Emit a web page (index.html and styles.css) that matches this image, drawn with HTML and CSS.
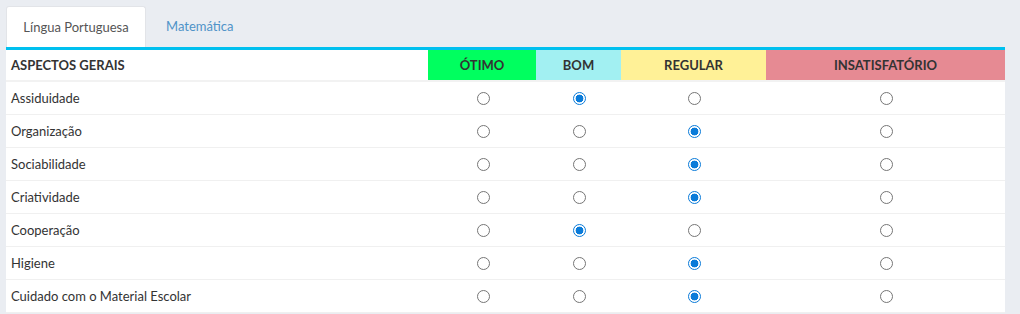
FILE: index.html
```html
<!DOCTYPE html>
<html lang="pt">
<head>
<meta charset="utf-8">
<link rel="stylesheet" href="styles.css">
</head>
<body>
<div class="wrap">
  <ul class="tabs">
    <li class="tab active">Língua Portuguesa</li>
    <li class="tab">Matemática</li>
  </ul>
  <div class="pane">
    <table class="grid">
      <colgroup>
        <col class="c-name"><col class="c-otimo"><col class="c-bom"><col class="c-reg"><col class="c-ins">
      </colgroup>
      <thead>
        <tr>
          <th class="h-name">ASPECTOS GERAIS</th>
          <th class="h-otimo">ÓTIMO</th>
          <th class="h-bom">BOM</th>
          <th class="h-reg">REGULAR</th>
          <th class="h-ins">INSATISFATÓRIO</th>
        </tr>
      </thead>
      <tbody>
        <tr><td>Assiduidade</td><td><input type="radio" name="r1"></td><td><input type="radio" name="r1" checked></td><td><input type="radio" name="r1"></td><td><input type="radio" name="r1"></td></tr>
        <tr><td>Organização</td><td><input type="radio" name="r2"></td><td><input type="radio" name="r2"></td><td><input type="radio" name="r2" checked></td><td><input type="radio" name="r2"></td></tr>
        <tr><td>Sociabilidade</td><td><input type="radio" name="r3"></td><td><input type="radio" name="r3"></td><td><input type="radio" name="r3" checked></td><td><input type="radio" name="r3"></td></tr>
        <tr><td>Criatividade</td><td><input type="radio" name="r4"></td><td><input type="radio" name="r4"></td><td><input type="radio" name="r4" checked></td><td><input type="radio" name="r4"></td></tr>
        <tr><td>Cooperação</td><td><input type="radio" name="r5"></td><td><input type="radio" name="r5" checked></td><td><input type="radio" name="r5"></td><td><input type="radio" name="r5"></td></tr>
        <tr><td>Higiene</td><td><input type="radio" name="r6"></td><td><input type="radio" name="r6"></td><td><input type="radio" name="r6" checked></td><td><input type="radio" name="r6"></td></tr>
        <tr><td>Cuidado com o Material Escolar</td><td><input type="radio" name="r7"></td><td><input type="radio" name="r7"></td><td><input type="radio" name="r7" checked></td><td><input type="radio" name="r7"></td></tr>
      </tbody>
    </table>
  </div>
</div>
</body>
</html>
```

FILE: styles.css
```css
* { box-sizing: border-box; }
html, body { margin: 0; padding: 0; }
body {
  background: #eaedf2;
  font-family: "Lato", "Liberation Sans", sans-serif;
  font-size: 13px;
  color: #333;
}
.wrap {
  padding: 6px 15px 0 6px;
  width: 1020px;
}
.tabs {
  list-style: none;
  margin: 0;
  padding: 0;
  display: flex;
  height: 41px;
}
.tab {
  padding: 0 16px;
  line-height: 41px;
  color: #4f93c8;
  margin-right: 4px;
}
.tab.active {
  background: #fff;
  color: #555;
  border: 1px solid #e2e4e8;
  border-bottom: none;
  border-radius: 3px 3px 0 0;
  width: 140px;
  text-align: center;
  padding: 0;
  margin-right: 4px;
}
.pane {
  background: #fff;
  border-top: 3px solid #00c0ef;
  width: 999px;
}
.grid {
  width: 999px;
  border-collapse: collapse;
  table-layout: fixed;
}
.c-name { width: 422px; }
.c-otimo { width: 108px; }
.c-bom { width: 85px; }
.c-reg { width: 145px; }
.c-ins { width: 239px; }
th {
  height: 31px;
  font-weight: 700;
  font-size: 13px;
  text-align: center;
  color: #333;
  padding: 0;
  border-bottom: 2px solid #f2f2f2;
}
th.h-name { text-align: left; padding-left: 5px; }
.h-otimo { background: #00ff5f; }
.h-bom { background: #a2f0f2; }
.h-reg { background: #fff197; }
.h-ins { background: #e68a93; }
td {
  height: 33px;
  padding: 0 0 0 2px;
  text-align: center;
  border-bottom: 1px solid #f0f0f0;
  vertical-align: middle;
}
td:first-child { text-align: left; padding-left: 5px; }
input[type="radio"] {
  appearance: none;
  -webkit-appearance: none;
  width: 13px;
  height: 13px;
  margin: 0;
  border: 1px solid #767676;
  border-radius: 50%;
  background: #fff;
  vertical-align: middle;
  display: inline-block;
  position: relative;
  top: -1px;
}
input[type="radio"]:checked {
  border: 1px solid #0a7bd9;
  background: radial-gradient(circle, #0a7bd9 0 3.6px, #fff 4.2px 100%);
}
```
